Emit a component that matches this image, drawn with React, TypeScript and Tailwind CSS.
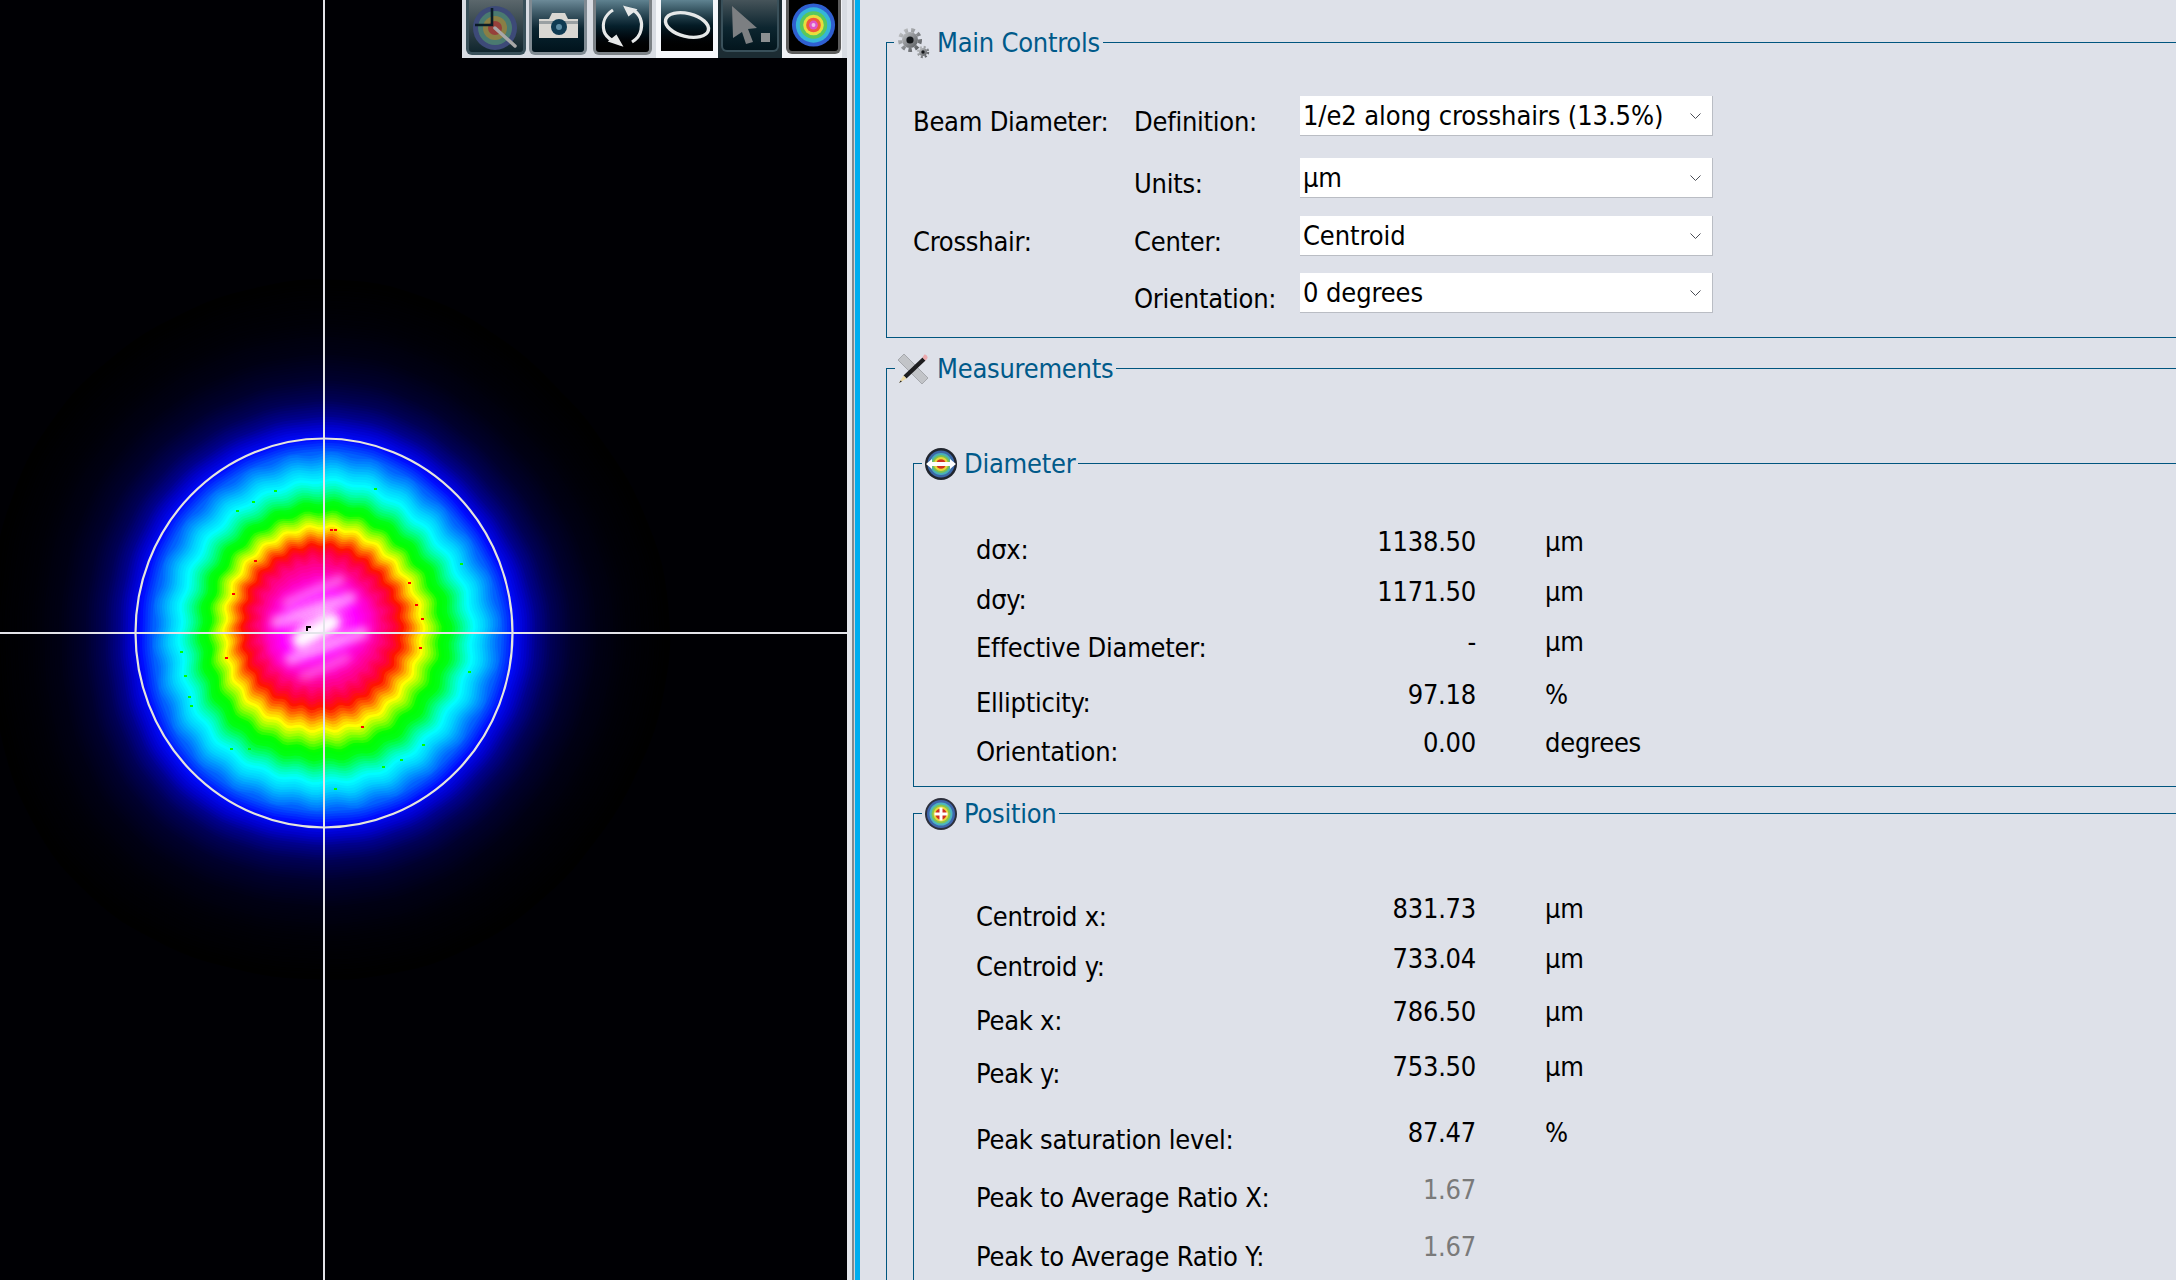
import { useMemo } from "react";

type Row = {
  label: string;
  value: string;
  unit?: string;
  gap: string;
  lift: string;
  muted?: boolean;
};

const diameterRows: Row[] = [
  { label: "dσx:", value: "1138.50", unit: "µm", gap: "mt-0", lift: "pb-[16px]" },
  { label: "dσy:", value: "1171.50", unit: "µm", gap: "mt-[10px]", lift: "pb-[16px]" },
  { label: "Effective Diameter:", value: "-", unit: "µm", gap: "mt-[8px]", lift: "pb-[12px]" },
  { label: "Ellipticity:", value: "97.18", unit: "%", gap: "mt-[15px]", lift: "pb-[16px]" },
  { label: "Orientation:", value: "0.00", unit: "degrees", gap: "mt-[9px]", lift: "pb-[18px]" },
];

const positionRows: Row[] = [
  { label: "Centroid x:", value: "831.73", unit: "µm", gap: "mt-0", lift: "pb-[16px]" },
  { label: "Centroid y:", value: "733.04", unit: "µm", gap: "mt-[10px]", lift: "pb-[16px]" },
  { label: "Peak x:", value: "786.50", unit: "µm", gap: "mt-[14px]", lift: "pb-[18px]" },
  { label: "Peak y:", value: "753.50", unit: "µm", gap: "mt-[13px]", lift: "pb-[14px]" },
  { label: "Peak saturation level:", value: "87.47", unit: "%", gap: "mt-[26px]", lift: "pb-[14px]" },
  { label: "Peak to Average Ratio X:", value: "1.67", gap: "mt-[18px]", lift: "pb-[16px]", muted: true },
  { label: "Peak to Average Ratio Y:", value: "1.67", gap: "mt-[19px]", lift: "pb-[20px]", muted: true },
];

// radius -> false colour, read off the reference along the crosshair
const colourStops: [number, number[]][] = [
  [340, [0, 0, 0]],
  [300, [0, 0, 7]],
  [270, [0, 0, 20]],
  [245, [0, 0, 45]],
  [225, [0, 0, 85]],
  [210, [0, 0, 140]],
  [200, [0, 0, 200]],
  [188, [0, 10, 255]],
  [173, [0, 110, 255]],
  [157, [0, 210, 255]],
  [147, [0, 255, 255]],
  [138, [0, 255, 170]],
  [125, [0, 255, 20]],
  [118, [0, 255, 0]],
  [108, [150, 255, 0]],
  [100, [255, 255, 0]],
  [94, [255, 190, 0]],
  [88, [255, 110, 0]],
  [80, [255, 20, 0]],
  [73, [255, 0, 60]],
  [62, [255, 0, 130]],
  [50, [255, 0, 200]],
  [35, [255, 0, 255]],
  [22, [255, 50, 255]],
  [8, [255, 150, 255]],
];

function colourAt(r: number) {
  for (let i = 0; i < colourStops.length - 1; i++) {
    const [r0, c0] = colourStops[i];
    const [r1, c1] = colourStops[i + 1];
    if (r <= r0 && r >= r1) {
      const t = (r0 - r) / (r0 - r1);
      const c = c0.map((v, k) => Math.round(v + (c1[k] - v) * t));
      return `rgb(${c[0]},${c[1]},${c[2]})`;
    }
  }
  return "#fff";
}

function contourPath(r: number) {
  const cx = 324 - Math.max(0, (130 - r) / 130) * 8;
  const cy = 633 - Math.min(7, Math.max(0, (130 - r) / 54) * 6);
  const scallop = r > 60 && r < 175 ? 1.8 : 0.4;
  const pts: string[] = [];
  for (let i = 0; i < 160; i++) {
    const a = (i / 160) * Math.PI * 2;
    const stretch = r < 60 ? 1 + ((60 - r) / 60) * 0.35 * Math.cos(2 * (a + 0.45)) : 1;
    const rr =
      r * stretch * (1 + 0.012 * Math.sin(3 * a + 1) + 0.008 * Math.sin(5 * a + 2)) +
      scallop * Math.sin(26 * a + r * 0.02);
    pts.push(`${(cx + rr * Math.cos(a)).toFixed(1)} ${(cy + rr * 1.03 * Math.sin(a)).toFixed(1)}`);
  }
  return `M${pts.join("L")}Z`;
}

const hotPixels: [number, number, string][] = [
  [274, 490, "#00ff00"], [252, 501, "#00ff00"], [236, 510, "#00ff00"], [374, 488, "#00ff00"],
  [460, 563, "#00ff00"], [180, 651, "#00ff00"], [184, 675, "#00ff00"], [188, 696, "#00ff00"],
  [190, 705, "#00ff00"], [230, 748, "#00ff00"], [248, 748, "#00ff00"], [468, 671, "#00ff00"],
  [422, 744, "#00ff00"], [400, 759, "#00ff00"], [382, 766, "#00ff00"], [334, 788, "#00ff00"],
  [334, 529, "#ff0000"], [330, 529, "#ff0000"], [254, 560, "#ff0000"], [232, 593, "#ff0000"],
  [408, 582, "#ff0000"], [415, 604, "#ff0000"], [421, 618, "#ff0000"], [419, 647, "#ff0000"],
  [225, 657, "#ff0000"], [361, 726, "#ff0000"],
];

function BeamImage() {
  const levels = useMemo(() => {
    const out: { r: number; d: string; fill: string }[] = [];
    for (let r = 340; r >= 8; r -= 2.5) {
      out.push({ r, d: contourPath(r), fill: colourAt(r) });
    }
    return out;
  }, []);

  return (
    <svg viewBox="0 0 847 1280" className="absolute inset-0 h-full w-full">
      <defs>
        <filter id="soft" x="-30%" y="-80%" width="160%" height="260%">
          <feGaussianBlur stdDeviation="4" />
        </filter>
      </defs>
      {levels.map((l) => (
        <path key={l.r} d={l.d} fill={l.fill} />
      ))}
      <g filter="url(#soft)" stroke="#fff" strokeLinecap="round" fill="none">
        <path d="M277 622L350 598" strokeWidth="13" opacity="0.5" />
        <path d="M291 659L362 633" strokeWidth="13" opacity="0.5" />
        <path d="M287 603L340 580" strokeWidth="11" opacity="0.35" />
        <path d="M304 676L346 658" strokeWidth="10" opacity="0.3" />
        <path d="M300 640L332 622" strokeWidth="15" opacity="1" />
      </g>
      {hotPixels.map(([x, y, c]) => (
        <rect key={`${x}-${y}`} x={x} y={y} width="3" height="2" fill={c} />
      ))}
      <path d="M306 626h5v2h-3v3h-2z" fill="#000" />
      <ellipse cx="324" cy="633" rx="188.5" ry="194.5" fill="none" stroke="#e6e6dc" strokeWidth="2.2" />
      <path d="M324 0V1280M0 633H847" stroke="#e4e4ea" strokeWidth="2" />
    </svg>
  );
}

const btnFace = "bg-gradient-to-b from-[#6c8a98] via-[#0b2531] via-55% to-[#01131c]";

function ToolButton({ width, outer, frame, children }: { width: string; outer: string; frame: string; children: React.ReactNode }) {
  return (
    <div className={`h-full shrink-0 ${width} ${outer}`}>
      <div className={`h-[55px] w-full overflow-hidden rounded-b-[6px] border-x-[3px] border-b-[3px] ${frame}`}>{children}</div>
    </div>
  );
}

function Toolbar() {
  return (
    <div className="absolute right-0 top-0 flex h-[58px] w-[385px] bg-[#d8dce3] pl-[4px]">
      <ToolButton width="w-[60px]" outer="mr-[3px]" frame="border-[#39505a] bg-gradient-to-b from-[#5b676c] to-[#10262e]">
        <svg viewBox="0 0 54 52" className="h-full w-full">
          <circle cx="26" cy="28" r="22" fill="#3d4a78" />
          <circle cx="26" cy="28" r="17" fill="#4a7a70" />
          <circle cx="26" cy="28" r="12" fill="#8a7f45" />
          <circle cx="26" cy="28" r="7" fill="#96403a" />
          <path d="M23 8V25H6" fill="none" stroke="#0a1c26" strokeWidth="2.6" />
          <path d="M26 28L46 46" stroke="#a8a8a8" strokeWidth="3.5" strokeLinecap="round" />
        </svg>
      </ToolButton>
      <ToolButton width="w-[58px]" outer="mr-[6px]" frame={`border-[#7f8a92] ${btnFace}`}>
        <svg viewBox="0 0 52 52" className="h-full w-full">
          <path d="M7 19H17L20 13H33L36 19H46V38H7Z" fill="#d9d7d2" />
          <path d="M7 21H46V24H7Z" fill="#9aa0a2" />
          <circle cx="27" cy="27" r="8" fill="#0f3b52" />
          <circle cx="27" cy="27" r="3" fill="#5c8ca3" />
        </svg>
      </ToolButton>
      <ToolButton width="w-[59px]" outer="mr-[4px]" frame="border-[#7b8186] bg-gradient-to-b from-[#5f8290] via-[#06202c] via-50% to-[#000]">
        <svg viewBox="0 0 53 52" fill="none" stroke="#e6e8e8" strokeWidth="3.2" className="h-full w-full">
          <path d="M17 10C9 15 6 23 8 31C9 35 12 38 17 41" />
          <path d="M37 10C44 14 47 22 45 30C44 35 41 39 36 42" />
          <path d="M30 8L38 10L33 14Z" fill="#e6e8e8" />
          <path d="M24 44L15 41L20 37Z" fill="#e6e8e8" />
        </svg>
      </ToolButton>
      <div className="h-full w-[62px] shrink-0 bg-[#f5f7fb] px-[5px]">
        <div className="h-[51px] w-full bg-gradient-to-b from-[#5f8391] via-[#041b25] via-50% to-[#000]">
          <svg viewBox="0 0 52 51" className="h-full w-full">
            <ellipse cx="26" cy="25" rx="22" ry="11.5" transform="rotate(14 26 25)" fill="none" stroke="#e6e8e8" strokeWidth="3.4" />
          </svg>
        </div>
      </div>
      <div className="flex h-full w-[64px] shrink-0 items-start bg-[#1c2c33] p-[3px] pt-0">
        <div className="h-[52px] w-full rounded-b-[6px] border-x-[2px] border-b-[2px] border-[#39505a] bg-gradient-to-b from-[#46545a] via-[#0d2630] via-55% to-[#03151d]">
          <svg viewBox="0 0 54 50" className="h-full w-full">
            <path d="M9 6L34 28L25 29L30 42L23 44L19 32L10 38Z" fill="#7c7f82" />
            <rect x="38" y="33" width="9" height="9" fill="#8c8f91" />
          </svg>
        </div>
      </div>
      <div className="h-full w-[60px] shrink-0 bg-[#f0f2f6] pl-[4px] pr-[1px]">
        <div className="h-[54px] w-full rounded-b-[6px] border-x-[3px] border-b-[3px] border-[#5c5c5c] bg-[#000]">
          <svg viewBox="0 0 50 51" className="h-full w-full">
            <circle cx="25" cy="25" r="22" fill="#2f5fd0" />
            <circle cx="25" cy="25" r="18" fill="#35b5d8" />
            <circle cx="25" cy="25" r="14" fill="#58c85c" />
            <circle cx="25" cy="25" r="10.5" fill="#e8de3c" />
            <circle cx="25" cy="25" r="7.5" fill="#ef5a3a" />
            <circle cx="25" cy="25" r="4.5" fill="#e052c8" />
            <circle cx="25" cy="25" r="2" fill="#eec0ec" />
          </svg>
        </div>
      </div>
    </div>
  );
}

function GearsIcon() {
  return (
    <svg viewBox="0 0 33 32" className="h-[32px] w-[33px]">
      <defs>
        <linearGradient id="gearFill" x1="0" y1="0" x2="1" y2="1">
          <stop offset="0" stopColor="#c4c6c9" />
          <stop offset="1" stopColor="#55585c" />
        </linearGradient>
      </defs>
      <circle cx="13" cy="13" r="8" fill="url(#gearFill)" />
      <circle cx="13" cy="13" r="10" fill="none" stroke="url(#gearFill)" strokeWidth="4" strokeDasharray="3.6 3.25" />
      <circle cx="13" cy="13" r="3.6" fill="#15181b" />
      <circle cx="26" cy="25" r="4" fill="url(#gearFill)" />
      <circle cx="26" cy="25" r="5" fill="none" stroke="url(#gearFill)" strokeWidth="2.4" strokeDasharray="2 1.93" />
      <circle cx="26" cy="25" r="1.7" fill="#15181b" />
    </svg>
  );
}

function RulerPencilIcon() {
  return (
    <svg viewBox="0 0 30 30" className="h-[30px] w-[30px]">
      <path d="M6 0L0 6L24 30L30 24Z" fill="#c2c4c8" stroke="#9a9da2" strokeWidth="0.8" />
      <path d="M24.5 3.5L27.5 6.5L8.5 24.5L5.5 21.5Z" fill="#1d1d1f" />
      <path d="M24.5 3.5L26 1C27 0 29 1 29.5 3C30 4 29 5 27.5 6.5Z" fill="#eba9ad" />
      <path d="M5.5 21.5L8.5 24.5L1 29Z" fill="#ecd9a2" />
      <path d="M2.8 26.5L3.8 27.6L1 29Z" fill="#111" />
    </svg>
  );
}

function DiameterIcon() {
  return (
    <svg viewBox="0 0 32 32" className="h-[32px] w-[32px]">
      <circle cx="16" cy="16" r="16" fill="#20252e" />
      <circle cx="16" cy="16" r="13.5" fill="#3c67a8" />
      <circle cx="16" cy="16" r="11" fill="#49b0b8" />
      <circle cx="16" cy="16" r="9" fill="#7cc24e" />
      <circle cx="16" cy="16" r="7" fill="#e9d83a" />
      <circle cx="16" cy="16" r="4.8" fill="#d0331f" />
      <path d="M1 16L7 11V14H25V11L31 16L25 21V18H7V21Z" fill="#fff" />
    </svg>
  );
}

function PositionIcon() {
  return (
    <svg viewBox="0 0 32 32" className="h-[32px] w-[32px]">
      <circle cx="16" cy="16" r="16" fill="#2c2f3c" />
      <circle cx="16" cy="16" r="14" fill="#3f66ad" />
      <circle cx="16" cy="16" r="11.5" fill="#4db6c0" />
      <circle cx="16" cy="16" r="9.5" fill="#87c64d" />
      <circle cx="16" cy="16" r="7.5" fill="#ecd83a" />
      <circle cx="16" cy="16" r="5.6" fill="#cf2f20" />
      <path d="M14.5 9.5H17.5V14.5H22.5V17.5H17.5V22.5H14.5V17.5H9.5V14.5H14.5Z" fill="#fff" />
    </svg>
  );
}

function GroupBox({
  title,
  icon,
  box,
  legend,
  children,
}: {
  title: string;
  icon: React.ReactNode;
  box: string;
  legend: string;
  children: React.ReactNode;
}) {
  return (
    <div className={`relative border-l border-t border-[#00557f] ${box}`}>
      <div className={`absolute top-0 flex h-[36px] -translate-y-1/2 items-center bg-[#dee1e9] ${legend}`}>
        {icon}
        <span className="text-[#005a8a]">{title}</span>
      </div>
      {children}
    </div>
  );
}

function Combo({ value }: { value: string }) {
  return (
    <div className="flex h-[40px] w-[413px] shrink-0 items-center justify-between border-b border-r border-[#babdc4] bg-white pl-[3px] pr-[11px] tracking-[-0.1px]">
      <span>{value}</span>
      <svg viewBox="0 0 11 6" className="h-[6px] w-[11px]" fill="none" stroke="#4a4d55" strokeWidth="1">
        <path d="M0.5 0.5L5.5 5.5L10.5 0.5" />
      </svg>
    </div>
  );
}

function ControlRow({ group, label, value }: { group?: string; label: string; value: string }) {
  return (
    <div className="flex h-[40px] items-center">
      <div className="w-[221px] pt-[11px]">{group}</div>
      <div className="w-[166px] pt-[11px]">{label}</div>
      <Combo value={value} />
    </div>
  );
}

function ReadoutRow({ row }: { row: Row }) {
  return (
    <div className={`flex h-[40px] items-center ${row.gap}`}>
      <div className="w-[370px]">{row.label}</div>
      <div className={`w-[130px] text-right ${row.lift} ${row.muted ? "text-[#7a7a7a]" : ""}`}>{row.value}</div>
      <div className={`ml-[69px] ${row.lift}`}>{row.unit}</div>
    </div>
  );
}

export default function App() {
  return (
    <div className="flex h-[1280px] w-[2176px] overflow-hidden bg-[#dee1e9] font-['DejaVu_Sans_Condensed','DejaVu_Sans',sans-serif] text-[27px] leading-[36px] tracking-[-0.25px] text-black">
      <div className="relative h-full w-[847px] shrink-0 bg-[#000004]">
        <BeamImage />
        <Toolbar />
      </div>
      <div className="h-full w-[5px] shrink-0 bg-[#e4e7ed]" />
      <div className="h-full w-[2px] shrink-0 bg-[#85888d]" />
      <div className="h-full w-[1px] shrink-0 bg-[#d0d3d8]" />
      <div className="h-full w-[5px] shrink-0 bg-[#00adef]" />

      <div className="flex-1 pl-[26px] pt-[42px]">
        <GroupBox title="Main Controls" icon={<GearsIcon />} box="h-[296px] border-b pl-[26px] pt-[53px]" legend="left-[7px] gap-[7px] pl-[3px] pr-[3px]">
          <ControlRow group="Beam Diameter:" label="Definition:" value="1/e2 along crosshairs (13.5%)" />
          <div className="mt-[22px]">
            <ControlRow label="Units:" value="µm" />
          </div>
          <div className="mt-[18px]">
            <ControlRow group="Crosshair:" label="Center:" value="Centroid" />
          </div>
          <div className="mt-[17px]">
            <ControlRow label="Orientation:" value="0 degrees" />
          </div>
        </GroupBox>

        <div className="mt-[30px]">
          <GroupBox title="Measurements" icon={<RulerPencilIcon />} box="h-[1000px] pl-[26px] pt-[94px]" legend="left-[8px] gap-[9px] pl-[3px] pr-[3px]">
            <GroupBox title="Diameter" icon={<DiameterIcon />} box="h-[324px] border-b pl-[62px] pt-[66px]" legend="left-[8px] gap-[7px] pl-[3px] pr-[3px]">
              {diameterRows.map((row) => (
                <ReadoutRow key={row.label} row={row} />
              ))}
            </GroupBox>
            <div className="mt-[26px]">
              <GroupBox title="Position" icon={<PositionIcon />} box="h-[600px] pl-[62px] pt-[83px]" legend="left-[8px] gap-[7px] pl-[3px] pr-[3px]">
                {positionRows.map((row) => (
                  <ReadoutRow key={row.label} row={row} />
                ))}
              </GroupBox>
            </div>
          </GroupBox>
        </div>
      </div>
    </div>
  );
}
